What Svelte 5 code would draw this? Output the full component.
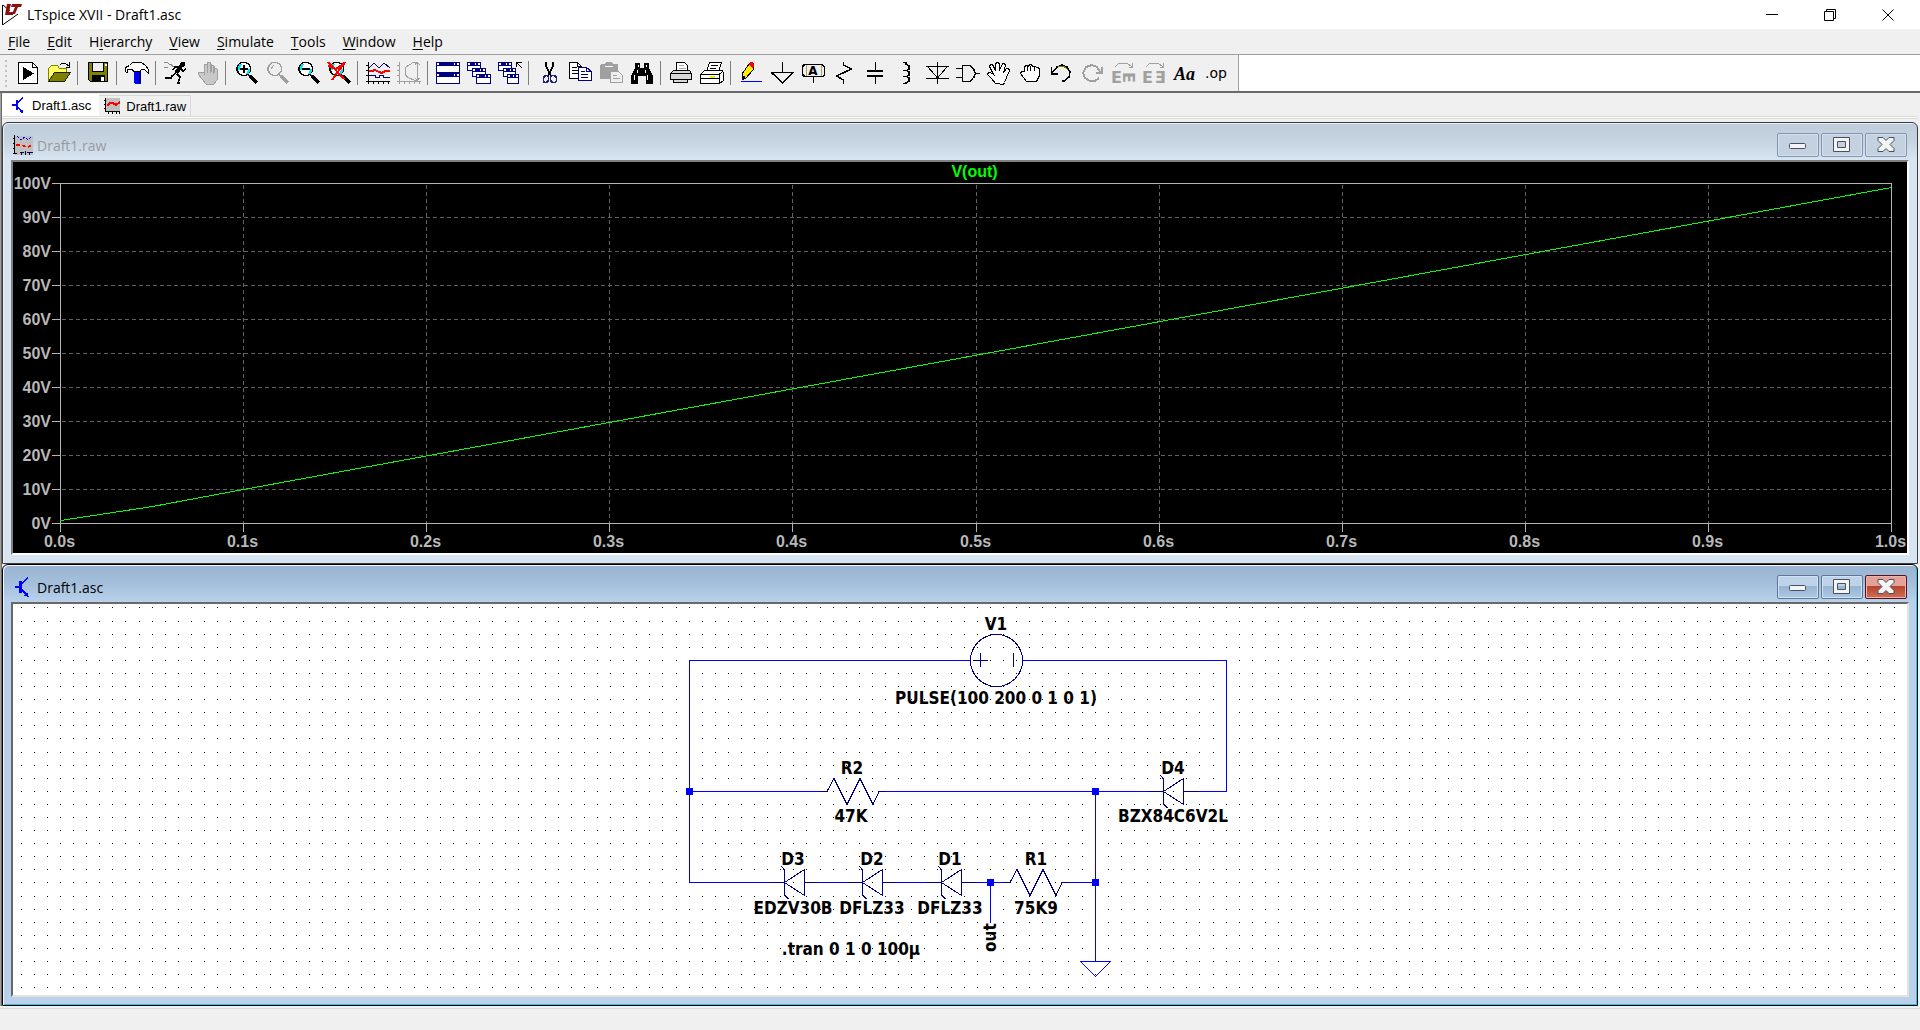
<script>
  // Main menu, split around the mnemonic letter
  const menus = [
    ['', 'F', 'ile'],
    ['', 'E', 'dit'],
    ['H', 'i', 'erarchy'],
    ['', 'V', 'iew'],
    ['', 'S', 'imulate'],
    ['', 'T', 'ools'],
    ['', 'W', 'indow'],
    ['', 'H', 'elp']
  ];

  const NAVY = '#000080';
  const GRAY = '#a0a0a0';
  const OLIVE = '#808000';

  // shape helpers for the toolbar glyphs
  const line = (d, s = '#000', w = 1) => ({ d, s, w, f: 'none' });
  const area = (d, f = '#000', s = 'none', w = 1) => ({ d, f, s, w });
  const text = (t, x, y, cls, transform = '') => ({ t, x, y, cls, transform });

  const lens = (c, bg) => [
    area('M7 1.500h5l3 2 1.500 3v3l-2 3-3 2H8l-3-2-2-3v-3l2-3z', bg, c, 1.500),
    line('M14 14l2 1', c, 2),
    line('M16 15l7 7', c, 3)
  ];
  const glint = line('M5 9V6l2-3M15 8v2l-2 3', '#00e5ee', 2);
  const axes = (c) => line('M2.5 1v22M0 4.5h3M0 9.5h3M0 14.5h3M0 20.5h24M7.5 20v3M12.5 20v3M17.5 20v3M22.5 20v3', c, 1);
  const win = (x, y, w, h) => [
    area(`M${x + 0.5} ${y + 0.5}h${w - 1}v${h - 1}h${1 - w}z`, '#fff', NAVY),
    area(`M${x} ${y}h${w}v4h${-w}z`, NAVY),
    area(`M${x + 1} ${y + 1}h2v2h-2zM${x + w - 6} ${y + 1}h1v2h-1zM${x + w - 3} ${y + 1}h2v2h-2z`, '#fff')
  ];

  const icons = {
    run: [area('M2.5 1.5h14l5 5v16h-19z', '#fff', '#000'), line('M16.5 1.5v5h5'), area('M7 6v13l11-6.500z')],
    open: [
      area('M1.500 19.500v-12l3-3h6l2 3h7v4h-11z', '#ffff66', OLIVE),
      area('M1.500 20.500l6-9h16l-6 9z', OLIVE, '#222200'),
      line('M13 4l2-2h3l4 3M22.500 1v5h-4')
    ],
    save: [
      area('M2.500 1.500h19v19h-17l-2-2z', OLIVE, '#000'),
      area('M6.500 2v8.500h11V2', '#efefef', '#000'),
      area('M6 14h13v7H6z'),
      area('M15 16h3v4h-3zM19 3h2v2h-2z', '#fff')
    ],
    control: [
      area('M9 10h7v12l-1 1h-5l-1-1z', '#0000ff'),
      line('M14.500 10v12', NAVY, 2),
      area('M.5 6.500l4-2 3-3h9l4 3 3 4v4l-2-2-2-2h-3l-2 2H9l-2-2H3l-1 3-1.500-1z', '#fff', '#000')
    ],
    runner: [
      area('M17 1h4v3l-1 2h-3l-1-2z'),
      line('M17 5l-5 7', '#000', 4),
      line('M15 6h-4l-2 3M17 8l2 2 3-2M12 12l-4 3-1 2H1M13 13l3 3-2 6h2', '#000', 1.500),
      line('M0 1h3l3 3M0 6l4 1M6 3l4 3', '#888')
    ],
    halt: [
      area('M9 12V4l1-1h2v8-9l1-1h2l1 2v8-7h2l1 1v7-5h2l1 1v11l-3 4h-8l-4-5-4-5 1-2h2z', '#c8c8c8', GRAY, 1),
      line('M9.500 3v11M12.500 2v10M15.500 2v10M18.500 5v8', GRAY)
    ],
    zoomIn: [...lens('#000', '#fff'), glint, line('M6 8h8M10 4v8', '#000', 2)],
    zoomPan: [...lens(GRAY, '#efefef'), line('M6 8l3-4', GRAY)],
    zoomOut: [...lens('#000', '#fff'), glint, line('M6 8h8', '#000', 2)],
    zoomFit: [...lens('#000', '#fff'), glint, line('M1 1l16 17M18 1L5 19M1 5l8 3 9-6', '#ff0000', 2)],
    waves: [
      axes('#000'),
      line('M3 7l5-5 5 5 5-5 6 5', NAVY),
      line('M3 10h3l3-1 4 2 3 1 3-2h5', '#ff0000', 2),
      line('M3 14.500h6v2h4v-2h4v2h7', NAVY)
    ],
    smith: [axes(GRAY), line('M8 12V7l4-3 5-3h4M8 11v3l4 3 5 2h4M20.500 1v19M18 4l2-3 3 3M18 17l2 2 3-2', GRAY)],
    tile: [...win(0, 1, 24, 11), ...win(0, 12, 24, 11)],
    cascade: [...win(0, 1, 14, 9), ...win(5, 7, 14, 9), ...win(9, 13, 15, 10)],
    restoreAll: [...win(0, 1, 14, 9), ...win(5, 7, 13, 9), ...win(9, 13, 12, 10), line('M18.500 6V1.500h5M19 2l5 5')],
    cut: [
      line('M9 1v4l5 10M16 1v4l-5 10', '#000', 2),
      line('M6.500 16.500l2-2h2l1 2v3l-2 2h-2l-1-1zM13.500 16.500l1-2h3l2 2v3l-1 2h-3l-2-2z', '#202070', 1.500)
    ],
    copy: [
      area('M1.500 1.500h8l4 4v12h-12z', '#fff', '#000'),
      line('M4 6.500h5M4 9.500h7M4 12.500h7M9.500 1.500v4h4'),
      area('M10.500 6.500h8l5 4v9h-13z', '#fff', NAVY),
      line('M13 10.500h4M13 13.500h7M13 16.500h7M18.500 6.500v4h5', NAVY)
    ],
    paste: [
      area('M1 4l1-1h4l1-2h6l1 2h4l1 1v14H1z', GRAY),
      line('M6 5.500h8', '#fff'),
      area('M11.500 10.500h8l4 4v7h-12z', '#efefef', GRAY),
      line('M14 14.500h4M14 17.500h7', GRAY)
    ],
    find: [
      area('M5 2h5v5h4V2h5v5l4 8v8h-7v-8h-8v8H1v-8l4-8z'),
      line('M4 14v5M17 14v5M7 9v3M15 9v3M8 4v2M16 4v2', '#fff')
    ],
    setup: [
      area('M7.500 9.500v-8h8l3 3v5z', '#fff', '#000'),
      line('M10 4.500h5M10 7.500h7', '#aaa', 1),
      area('M1.500 12.500l3-3h16l2 3v6h-4v3h-14v-3h-3z', '#d8d8d8', '#000'),
      line('M1 12.500h21M5 18.500h14')
    ],
    print: [
      area('M6.500 10.500l3-9h12l-3 9z', '#fff', '#000'),
      line('M11 4.500h7M10 7.500h6'),
      area('M.5 13.500l4-4h18l1 3v7l-4 3h-19z', '#fff', '#000'),
      line('M1 13.500h18v9M19 13.500l4-3M1 17.500h18'),
      line('M10 15.500h5', '#eeee00', 2)
    ],
    wire: [
      line('M2 20.500h21', '#0000ff'),
      area('M3 19v-6l7-10 4 2v4l-7 8z', '#ffee00', '#000'),
      area('M3 19v-5l4 2z'),
      area('M9 3l2-2h3l1 2v3l-2 1z', '#ff0000')
    ],
    ground: [line('M12.500 1v11M1 11.500h23M2 12l10.500 10L23 12', '#000', 1.500)],
    netLabel: [
      area('M1.500 5.500l2-2h17l3 2v9l-2 1h-18l-2-2z', '#efefef', '#000', 1.500),
      line('M5.500 4v11M20.500 4v11', '#b0a060'),
      text('A', 12, 14, 'glyph-a'),
      line('M12.500 16v6')
    ],
    resistor: [line('M11.500 1v3l8 4-15 7 7 4v4', '#000', 1.500)],
    capacitor: [line('M12.500 1v9M12.500 16v7'), line('M4 10h16M4 15h16', '#000', 2)],
    inductor: [line('M9 1.500h3v2l3 1v4l-3 1h-3M12 9.500l3 1v4l-3 1h-3M12 15.500l3 1v4l-3 1v1H9', '#000', 1.500)],
    diode: [line('M12.500 1v22M1 5.500h23M3 6l9.500 11L22 6M1 17.500h23')],
    gate: [area('M6.500 4.500h7l4 3 2 5-2 5-4 3h-7z', '#efefef', '#000', 1.500), line('M0 7.500h6M0 16.500h6M19 12.500h5', '#000', 1.500)],
    move: [
      area('M8.500 22.500l-4-5-4-4 1-2h2l3 2-4-8 1-2h2l3 6V2.500l2-1 2 1v7l3-7h2l1 2-2 7 3-4h2l1 2-3 7-2 5-1 2z', '#fff', '#000')
    ],
    drag: [
      area('M8.500 20.500l-3-4-3-4 1-2h3v-5l2-1 2 1 1-2h2l1 2h3l1 1h2l1 2v6l-3 6z', '#fff', '#000'),
      line('M9.500 6v4M12.500 5v5M16.500 6v4')
    ],
    undo: [line('M2.500 6v7h6M3 12l5-6 5-2 5 2 3 5-1 5-5 4h-2', '#000', 1.500), line('M9 5.500h6l4 3', OLIVE)],
    redo: [line('M21.500 6v6h-6M20 11l-3-5-5-2-6 2-3 6 2 5 5 3h5l4-3', GRAY, 2)],
    rotate: [text('E', 0, 22, 'glyph-e'), text('E', 11, -12, 'glyph-e', 'rotate(90)'), line('M4 6l4-4h8l5 4M21.500 2v4h-4', GRAY)],
    mirror: [text('E', 0, 22, 'glyph-e'), text('E', -24, 22, 'glyph-e', 'scale(-1 1)'), line('M4 6l4-4h8l5 4M21.500 2v4h-4', GRAY)],
    comment: [text('Aa', 1, 19, 'glyph-aa')],
    directive: [text('.op', 1, 17, 'glyph-op')]
  };

  const toolGroups = [
    [['run', 'New Schematic'], ['open', 'Open']],
    [['save', 'Save']],
    [['control', 'Control Panel']],
    [['runner', 'Run'], ['halt', 'Halt']],
    [['zoomIn', 'Zoom to rectangle'], ['zoomPan', 'Pan'], ['zoomOut', 'Zoom back'], ['zoomFit', 'Zoom full extents']],
    [['waves', 'Autorange'], ['smith', 'Smith chart']],
    [['tile', 'Tile Windows'], ['cascade', 'Cascade Windows'], ['restoreAll', 'Close Windows']],
    [['cut', 'Cut'], ['copy', 'Copy'], ['paste', 'Paste'], ['find', 'Find']],
    [['setup', 'Print Setup'], ['print', 'Print']],
    [
      ['wire', 'Wire'], ['ground', 'Ground'], ['netLabel', 'Label Net'], ['resistor', 'Resistor'],
      ['capacitor', 'Capacitor'], ['inductor', 'Inductor'], ['diode', 'Diode'], ['gate', 'Component'],
      ['move', 'Move'], ['drag', 'Drag'], ['undo', 'Undo'], ['redo', 'Redo'],
      ['rotate', 'Rotate'], ['mirror', 'Mirror'], ['comment', 'Text'], ['directive', 'SPICE Directive']
    ]
  ];
  const disabled = ['halt', 'zoomPan', 'smith', 'paste', 'redo', 'rotate', 'mirror'];

  // Waveform pane: everything is derived from the pane size
  let plotWidth = $state(1894);
  let plotHeight = $state(391);
  const pad = { left: 47, right: 16, top: 21, bottom: 30 };
  const steps = Array.from({ length: 11 }, (_, i) => i);
  // V(out) samples: seconds, volts
  const trace = [[0, 0.8], [0.05, 4.9], [0.1, 9.9], [1, 98.8]];

  let plotRight = $derived(plotWidth - pad.right);
  let plotBottom = $derived(plotHeight - pad.bottom);
  const px = (t) => Math.round(pad.left + t * (plotRight - pad.left)) + 0.5;
  const py = (v) => Math.round(plotBottom - (v / 100) * (plotBottom - pad.top)) + 0.5;
  let tracePoints = $derived(trace.map(([t, v]) => `${px(t)},${py(v)}`).join(' '));

  // Schematic pane
  let sheetWidth = $state(1894);
  let sheetHeight = $state(391);
  const GRID = 13.097;
  let gridDots = $derived.by(() => {
    let d = '';
    for (let y = 3.95; y < sheetHeight - 2; y += GRID) {
      for (let x = 8.18; x < sheetWidth - 2; x += GRID) {
        d += `M${Math.floor(x)} ${Math.floor(y)}h1v1h-1z`;
      }
    }
    return d;
  });

  const wires = [
    'M957 56.500H676.500V278.500H756',
    'M1010 56.500H1213.500V187.500H1185',
    'M676.500 187.500H807M873 187.500H1136',
    'M1082.500 187.500V357.500',
    'M806 278.500H834M884 278.500H913M962 278.500H992M1055 278.500H1082',
    'M977.500 278.500V319'
  ];
  const junctions = [[676, 187], [1082, 187], [977, 278], [1082, 278]];
  const resistors = [[814, 187], [997, 278]];
  const diodes = [[771, 278], [849, 278], [928, 278], [1150, 187]];
  const labels = [
    ['V1', 983, 26], ['PULSE(100 200 0 1 0 1)', 983, 100],
    ['R2', 839, 170], ['47K', 838, 218],
    ['D4', 1160, 170], ['BZX84C6V2L', 1160, 218],
    ['D3', 780, 261], ['EDZV30B', 780, 310],
    ['D2', 859, 261], ['DFLZ33', 859, 310],
    ['D1', 937, 261], ['DFLZ33', 937, 310],
    ['R1', 1023, 261], ['75K9', 1023, 310],
    ['.tran 0 1 0 100µ', 838, 351]
  ];
</script>

{#snippet transistor()}
  <svg class="doc-icon" viewBox="0 0 14 20" aria-hidden="true">
    <path d="M0 10h5M6 8l7-7.500M6 12l7 7" fill="none" stroke="#0000ff" stroke-width="1.5" />
    <path d="M4 4h3v12H4zM14 20l-5-1 3-4z" fill="#0000ff" />
  </svg>
{/snippet}

{#snippet frameButtons()}
  <div class="frame-buttons">
    <button aria-label="Minimize">
      <svg viewBox="0 0 20 18"><rect x="1.5" y="7.5" width="16" height="5" rx="1" fill="#f4f4f4" stroke="#4b5061" /></svg>
    </button>
    <button aria-label="Maximize">
      <svg viewBox="0 0 20 18">
        <path d="M1.500 1.500h16v14h-16zM5.500 5.500v6h8v-6z" fill="#f4f4f4" fill-rule="evenodd" stroke="#4b5061" />
      </svg>
    </button>
    <button class="close" aria-label="Close">
      <svg viewBox="0 0 20 18">
        <path d="M2 1.500h5l3 3 3-3h5v3l-4 4 4 4v3h-5l-3-3-3 3H2v-3l4-4-4-4z" fill="#f4f4f4" stroke="#4b5061" />
      </svg>
    </button>
  </div>
{/snippet}

<div class="app">
  <header class="titlebar">
    <svg class="logo" viewBox="0 0 20 21" aria-hidden="true">
      <path d="M.5 1v20L16 10" fill="none" stroke="#000" />
      <path d="M1 1l7 6" stroke="#000" />
      <path d="M5 0h4L7 8h5l-1 3H3zM10 0h10l-1 3h-3l-3 7h-3l3-7h-4z" fill="#8b1010" />
    </svg>
    <h1>LTspice XVII - Draft1.asc</h1>
    <div class="window-buttons">
      <button aria-label="Minimize"><svg viewBox="0 0 12 12"><path d="M0 5.500h12" /></svg></button>
      <button aria-label="Restore"><svg viewBox="0 0 12 12"><path d="M.5 2.500h9v9h-9zM2.500 2.500v-2h9v9h-2" /></svg></button>
      <button aria-label="Close"><svg viewBox="0 0 12 12"><path d="M.5.5l11 11M11.500.5l-11 11" /></svg></button>
    </div>
  </header>

  <nav class="menubar">
    {#each menus as [before, key, after]}
      <button>{before}<u>{key}</u>{after}</button>
    {/each}
  </nav>

  <div class="toolbar-row">
    <div class="toolbar" role="toolbar" aria-label="Schematic tools">
      <span class="gripper"></span>
      {#each toolGroups as group, i}
        {#if i > 0}<span class="separator"></span>{/if}
        {#each group as [name, label]}
          <button title={label} aria-label={label} disabled={disabled.includes(name)}>
            <svg viewBox="0 0 24 24">
              {#each icons[name] as shape}
                {#if shape.t}
                  <text x={shape.x} y={shape.y} class={shape.cls} transform={shape.transform}>{shape.t}</text>
                {:else}
                  <path d={shape.d} fill={shape.f} stroke={shape.s} stroke-width={shape.w} />
                {/if}
              {/each}
            </svg>
          </button>
        {/each}
      {/each}
    </div>
  </div>

  <main>
    <div class="tabs" role="tablist">
      <button class="tab active" role="tab" aria-selected="true">
        {@render transistor()}
        Draft1.asc
      </button>
      <button class="tab" role="tab" aria-selected="false">
        <svg class="raw-icon" viewBox="0 0 16 16" aria-hidden="true">
          <path d="M2 0h14v13H2z" fill="#c0c0c0" />
          <path d="M1.500 0v14M0 2.500h2M0 6.500h2M0 10.500h2M1 13.500h15M4.500 13v3M8.500 13v3M12.500 13v3M15.500 13v3" stroke="#000" />
          <path d="M3 8l3-3h3l3 2 4-3" fill="none" stroke="#ff0000" stroke-width="2" />
        </svg>
        Draft1.raw
      </button>
    </div>

    <section class="child">
      <div class="caption">
        <svg class="wave-icon" viewBox="0 0 20 20" aria-hidden="true">
          <path d="M2 1h18v19H2z" fill="#c0c0c0" />
          <path d="M1.500 0v19M0 3.500h2M0 8.500h2M0 13.500h2M0 18.500h4M8.500 17v3M12.500 16v4M16.500 18v2" stroke="#000" />
          <path d="M4 1l4 4 4-3 3 3 4-4" fill="none" stroke="#0000ff" stroke-dasharray="3 1" />
          <path d="M3 10h4l4 1 4 1 4-2" fill="none" stroke="#ff0000" stroke-width="1.5" stroke-dasharray="4 2" />
          <path d="M7 17.500h4M14 17.500h6" stroke="#000080" />
        </svg>
        <h2>Draft1.raw</h2>
        {@render frameButtons()}
      </div>
      <div class="pane plot" bind:clientWidth={plotWidth} bind:clientHeight={plotHeight}>
        <svg role="img" aria-label="V(out) against time">
          {#each steps.slice(1, 10) as i}
            <path class="grid" d="M{px(i / 10)} {pad.top + 2}V{plotBottom}" />
            <path class="grid" d="M{pad.left + 2} {py(i * 10)}H{plotRight}" />
          {/each}
          <path class="axis" d="M{px(0)} {py(100)}H{px(1)}V{py(0)}H{px(0)}z" />
          {#each steps as i}
            <path class="axis" d="M{px(i / 10)} {plotBottom}v9M{pad.left - 8} {py(i * 10)}h8" />
            <text class="tick" x={px(i / 10) - 1} y={plotBottom + 24} text-anchor="middle">{(i / 10).toFixed(1)}s</text>
            <text class="tick" x={pad.left - 9} y={py(i * 10) + 5} text-anchor="end">{i * 10}V</text>
          {/each}
          <polyline class="trace" points={tracePoints} />
          <text class="trace-name" x={px(0.5) - 2} y="15" text-anchor="middle">V(out)</text>
        </svg>
      </div>
    </section>

    <section class="child active">
      <div class="caption">
        {@render transistor()}
        <h2>Draft1.asc</h2>
        {@render frameButtons()}
      </div>
      <div class="pane sheet" bind:clientWidth={sheetWidth} bind:clientHeight={sheetHeight}>
        <svg role="img" aria-label="Draft1 schematic">
          <path d={gridDots} fill="#000" />
          {#each wires as d}
            <path class="wire" {d} />
          {/each}
          <path class="wire" d="M1067.500 357.500h30l-15 15z" />

          <circle class="part" cx="983.5" cy="56.5" r="26" />
          <path class="part" d="M960 56.500h15M967.500 49v14M1000.500 49v14" />

          {#each resistors as [x, y]}
            <path class="part" d="M{x - 7} {y + 0.5}h7l7 -13l13 26l13 -26l13 26l6 -13h7" />
          {/each}
          {#each diodes as [x, y]}
            <path class="part" d="M{x - 15} {y + 0.5}h15M{x + 20} {y + 0.5}h15" />
            <path class="part" d="M{x + 0.5} {y + 0.5}l20 -13v26zM{x - 3} {y - 16}l3.500 4v25l4 4" />
          {/each}
          {#each junctions as [x, y]}
            <rect class="junction" x={x - 3} y={y - 3} width="7" height="7" />
          {/each}
          {#each labels as [label, x, y]}
            <text class="label" {x} {y} text-anchor="middle">{label}</text>
          {/each}
          <text class="label" transform="translate(983 348) rotate(-90)">out</text>
        </svg>
      </div>
    </section>
  </main>

  <footer class="statusbar"></footer>
</div>

<style>
  :global(body) {
    margin: 0;
    background: #f0f0f0;
  }
  .app {
    display: flex;
    flex-direction: column;
    height: 100vh;
    min-height: 600px;
    overflow: hidden;
    background: #f0f0f0;
    color: #000;
    font-family: "Open Sans", "Noto Sans", sans-serif;
    font-size: 14px;
  }
  button {
    padding: 0;
    border: 0;
    background: none;
    color: inherit;
    font: inherit;
  }
  h1, h2 {
    margin: 0;
    font-size: 14px;
    font-weight: 400;
  }

  .titlebar {
    display: flex;
    align-items: center;
    flex: 0 0 29px;
    padding-left: 2px;
    background: #fff;
  }
  .logo {
    width: 20px;
    height: 21px;
    margin-right: 5px;
  }
  .window-buttons {
    display: flex;
    margin-left: auto;
    padding-right: 3px;
  }
  .window-buttons button {
    display: flex;
    align-items: center;
    justify-content: center;
    width: 58px;
    height: 28px;
  }
  .window-buttons svg {
    width: 12px;
    height: 12px;
    fill: none;
    stroke: #000;
  }

  .menubar {
    display: flex;
    gap: 17px;
    flex: 0 0 25px;
    padding-left: 8px;
    border-bottom: 1px solid #a0a0a0;
  }
  .menubar u {
    text-decoration: underline #000;
    text-decoration-thickness: 1px;
    text-decoration-skip-ink: none;
    text-underline-offset: 2px;
  }

  .toolbar-row {
    display: flex;
    flex: 0 0 36px;
    background: #fff;
  }
  .toolbar {
    display: flex;
    align-items: center;
    padding: 0 7px 0 5px;
    border-right: 1px solid #a0a0a0;
    background: #f0f0f0;
  }
  .gripper {
    width: 2px;
    height: 27px;
    margin-right: 5px;
    background: repeating-linear-gradient(#c0c0c0 0 2px, transparent 2px 5px);
  }
  .toolbar button {
    display: flex;
    align-items: center;
    justify-content: center;
    width: 31px;
    height: 36px;
  }
  .toolbar svg {
    width: 24px;
    height: 24px;
    overflow: visible;
    shape-rendering: crispEdges;
  }
  .separator {
    width: 1px;
    height: 24px;
    margin: 0 4px 0 3px;
    background: #808080;
  }
  .glyph-a {
    font: bold 12px "DejaVu Sans", sans-serif;
    text-anchor: middle;
  }
  .glyph-e {
    font: bold 16px "DejaVu Sans", sans-serif;
    fill: #a0a0a0;
  }
  .glyph-aa {
    font: italic bold 18px "Liberation Serif", serif;
  }
  .glyph-op {
    font: 14px "DejaVu Sans", sans-serif;
  }

  main {
    display: flex;
    flex-direction: column;
    flex: 1;
    min-height: 0;
    padding: 0 2px;
    border-top: 2px solid #696969;
    box-shadow: inset 1px 0 #a0a0a0, inset 2px 0 #696969;
  }
  .tabs {
    display: flex;
    flex: 0 0 29px;
    align-items: flex-start;
    box-sizing: border-box;
    background: linear-gradient(#d9d9d9, #d9d9d9) 0 23px / 100% 1px no-repeat,
      linear-gradient(#fff, #fff) 0 24px / 100% 1px no-repeat,
      linear-gradient(#d9d9d9, #d9d9d9) 0 25px / 100% 1px no-repeat;
  }
  .tab {
    display: flex;
    align-items: center;
    gap: 6px;
    height: 21px;
    margin-top: 2px;
    padding: 0 4px 0 5px;
    border: 1px solid #d9d9d9;
    border-width: 1px 1px 0 0;
    font: 13px "Liberation Sans", Arial, sans-serif;
  }
  .tab.active {
    height: 22px;
    gap: 8px;
    margin-top: 1px;
    padding: 0 8px 0 10px;
    border: 0;
    background: #fff;
  }
  .doc-icon {
    width: 14px;
    height: 20px;
    shape-rendering: crispEdges;
  }
  .tab .doc-icon {
    width: 12px;
    height: 16px;
  }
  .raw-icon {
    width: 16px;
    height: 16px;
    shape-rendering: crispEdges;
  }

  .child {
    display: flex;
    flex-direction: column;
    flex: 1;
    min-height: 0;
    padding: 0 8px 8px;
    border: 1px solid #3c3c3c;
    border-radius: 6px 6px 0 0;
    background: linear-gradient(#bfcddb, #c6d4e2 18px, #d7e4f2 37px);
    box-shadow: inset 1px 1px #e8f0f8;
  }
  .child.active {
    border-color: #000;
    background: linear-gradient(#99b4d1, #a4bfdb 18px, #b9d1ea 37px);
    box-shadow: inset 1px 1px #f4f8fc, inset -1px -1px #27c3e8;
  }
  .caption {
    display: flex;
    align-items: center;
    box-sizing: border-box;
    flex: 0 0 37px;
    padding: 7px 0 0 2px;
    color: #9a9a9a;
  }
  .active .caption {
    padding-left: 4px;
    color: #000;
  }
  .caption h2 {
    margin-left: 4px;
  }
  .active .caption h2 {
    margin-left: 8px;
  }
  .wave-icon {
    width: 20px;
    height: 20px;
    shape-rendering: crispEdges;
  }
  .frame-buttons {
    display: flex;
    gap: 2px;
    margin-left: auto;
    padding-right: 2px;
  }
  .frame-buttons button {
    display: flex;
    align-items: center;
    justify-content: center;
    width: 42px;
    height: 24px;
    border: 1px solid #8394b2;
    border-radius: 2px;
    background: #c3d1e0;
    box-shadow: inset 0 0 0 1px #d3e0ee;
  }
  .active .frame-buttons button {
    border-color: #5f7695;
    background: linear-gradient(#bdd3ea 0 45%, #98b3d0 45%, #adc8e4);
    box-shadow: inset 0 0 0 1px #d0e2f4;
  }
  .active .frame-buttons .close {
    border-color: #5a1020;
    background: linear-gradient(#e3a297 0 45%, #b8402a 45%, #cf6f5a);
    box-shadow: inset 0 0 0 1px #ecb5aa;
  }
  .frame-buttons svg {
    width: 20px;
    height: 18px;
  }

  .pane {
    flex: 1;
    min-height: 0;
    overflow: hidden;
    border: 2px solid;
    border-color: #808080 #fff #fff #808080;
  }
  .pane svg {
    display: block;
    width: 100%;
    height: 100%;
  }
  .plot {
    background: #000;
  }
  .sheet {
    border-color: #696969 #e3e3e3 #e3e3e3 #696969;
    background: #fff;
  }
  .grid {
    stroke: #606060;
    stroke-dasharray: 4 3;
    shape-rendering: crispEdges;
  }
  .axis {
    fill: none;
    stroke: #b4b4b4;
    shape-rendering: crispEdges;
  }
  .tick {
    fill: #b8b8b8;
    font: bold 16px "Liberation Sans", Arial, sans-serif;
  }
  .trace {
    fill: none;
    stroke: #00ff00;
    shape-rendering: crispEdges;
  }
  .trace-name {
    fill: #00ff00;
    font: bold 16px "Liberation Sans", Arial, sans-serif;
  }
  .wire {
    fill: none;
    stroke: #0000ff;
    shape-rendering: crispEdges;
  }
  .part {
    fill: none;
    stroke: #000080;
    shape-rendering: crispEdges;
  }
  .junction {
    fill: #0000ff;
  }
  .label {
    font: bold 17px "DejaVu Sans Condensed", "Noto Sans", sans-serif;
  }

  .statusbar {
    flex: 0 0 21px;
    border-top: 1px solid #d9d9d9;
    margin-top: 2px;
  }
</style>
